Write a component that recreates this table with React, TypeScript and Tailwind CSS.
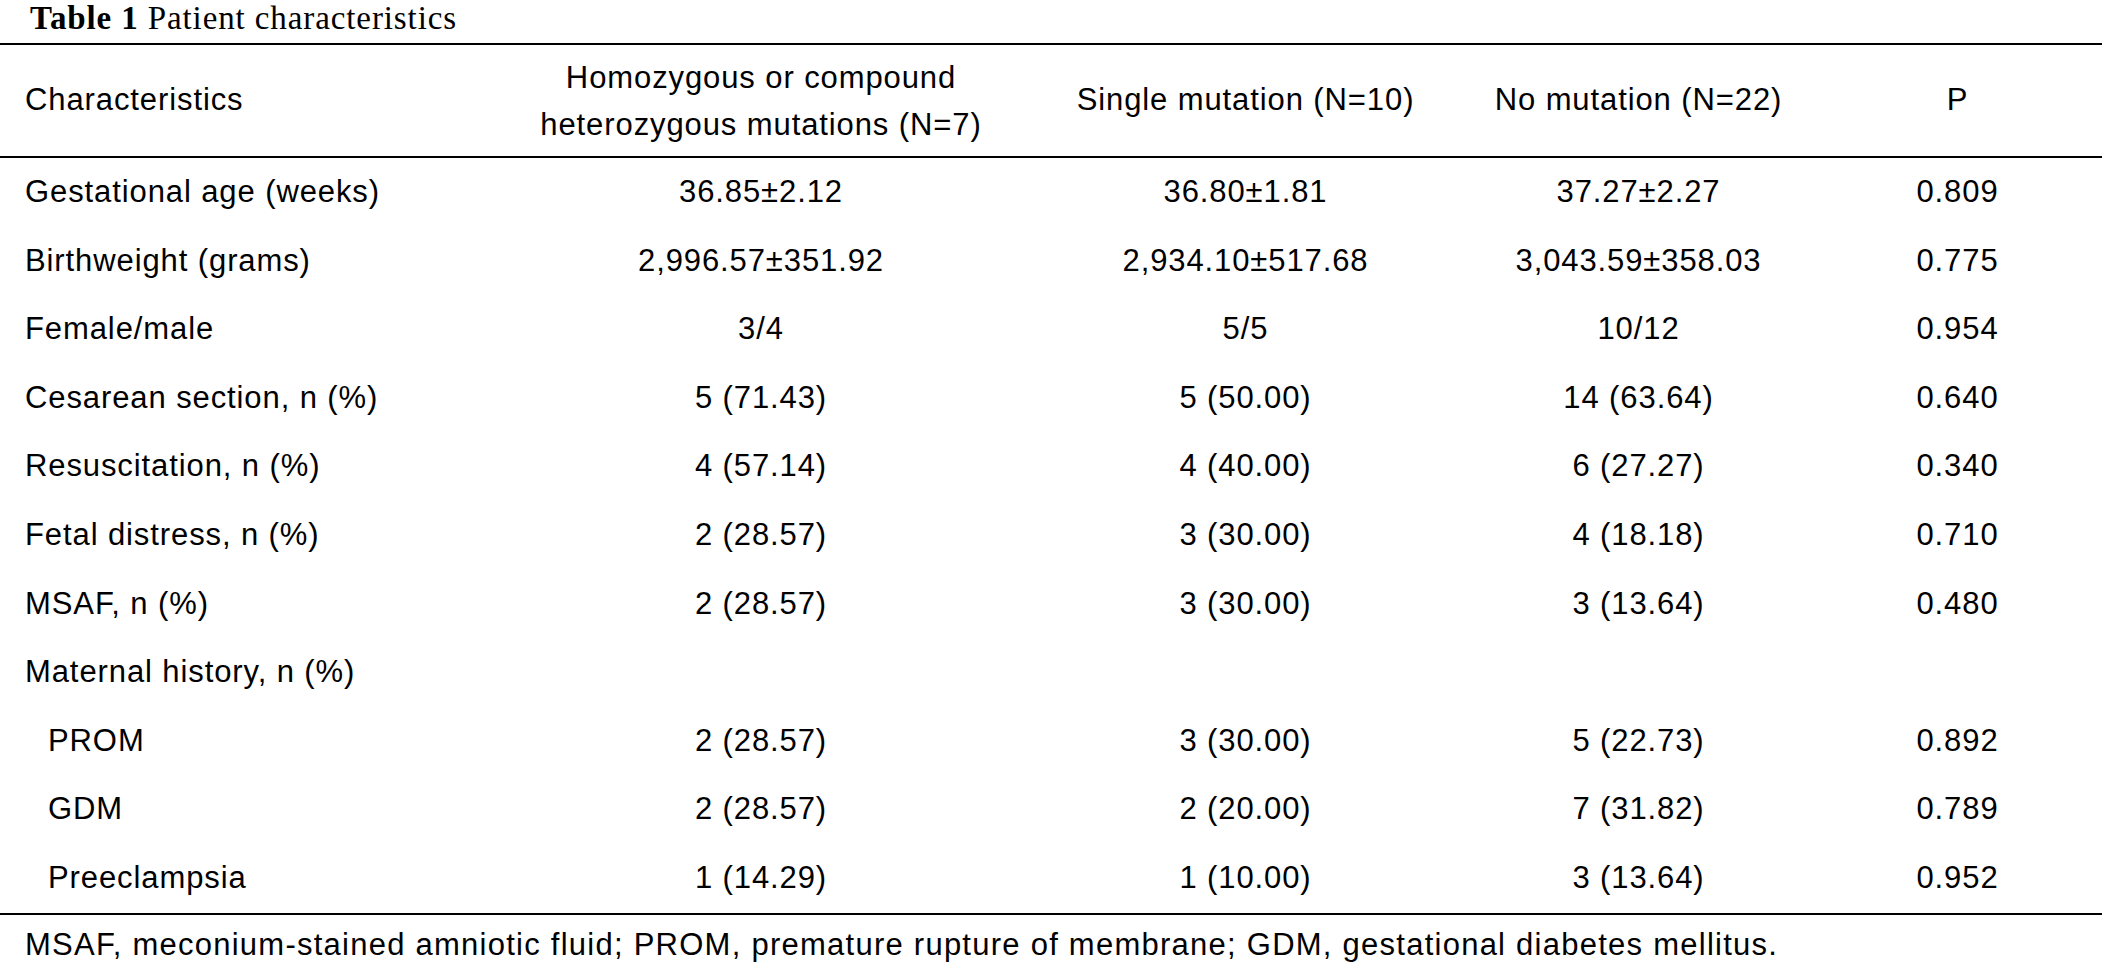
import React from "react";

type Row = { label: string; indent?: boolean; v: [string, string, string, string] };

const rows: Row[] = [
  { label: "Gestational age (weeks)", v: ["36.85±2.12", "36.80±1.81", "37.27±2.27", "0.809"] },
  { label: "Birthweight (grams)", v: ["2,996.57±351.92", "2,934.10±517.68", "3,043.59±358.03", "0.775"] },
  { label: "Female/male", v: ["3/4", "5/5", "10/12", "0.954"] },
  { label: "Cesarean section, n (%)", v: ["5 (71.43)", "5 (50.00)", "14 (63.64)", "0.640"] },
  { label: "Resuscitation, n (%)", v: ["4 (57.14)", "4 (40.00)", "6 (27.27)", "0.340"] },
  { label: "Fetal distress, n (%)", v: ["2 (28.57)", "3 (30.00)", "4 (18.18)", "0.710"] },
  { label: "MSAF, n (%)", v: ["2 (28.57)", "3 (30.00)", "3 (13.64)", "0.480"] },
  { label: "Maternal history, n (%)", v: ["", "", "", ""] },
  { label: "PROM", indent: true, v: ["2 (28.57)", "3 (30.00)", "5 (22.73)", "0.892"] },
  { label: "GDM", indent: true, v: ["2 (28.57)", "2 (20.00)", "7 (31.82)", "0.789"] },
  { label: "Preeclampsia", indent: true, v: ["1 (14.29)", "1 (10.00)", "3 (13.64)", "0.952"] },
];

const cols = "grid grid-cols-[495px_532px_437px_349px_289px]";

export default function App() {
  return (
    <div className="w-[2102px] h-[963px] bg-white text-black overflow-hidden">
      <div className="h-[43px] flex items-start pl-[30px] font-['Liberation_Serif',serif] text-[33px] tracking-[0.9px] leading-[37px]">
        <span className="font-bold">Table 1</span>
        <span className="ml-[9px]">Patient characteristics</span>
      </div>
      <div className="font-['Liberation_Sans',Arial,sans-serif] text-[31px] tracking-[0.9px]">
        <div className={`${cols} h-[115px] border-t-2 border-b-2 border-black items-center`}>
          <div className="pl-[25px]">Characteristics</div>
          <div className="text-center leading-[47px]">
            Homozygous or compound
            <br />
            heterozygous mutations (N=7)
          </div>
          <div className="text-center">Single mutation (N=10)</div>
          <div className="text-center">No mutation (N=22)</div>
          <div className="text-center">P</div>
        </div>
        <div className="border-b-2 border-black">
          {rows.map((r) => (
            <div key={r.label} className={`${cols} h-[68.6px] items-center`}>
              <div className={r.indent ? "pl-[48px]" : "pl-[25px]"}>{r.label}</div>
              {r.v.map((x, i) => (
                <div key={i} className="text-center">
                  {x}
                </div>
              ))}
            </div>
          ))}
        </div>
        <div className="pl-[25px] pt-[12px] h-[49px] flex items-center tracking-[1.25px]">
          MSAF, meconium-stained amniotic fluid; PROM, premature rupture of membrane; GDM, gestational diabetes mellitus.
        </div>
      </div>
    </div>
  );
}
